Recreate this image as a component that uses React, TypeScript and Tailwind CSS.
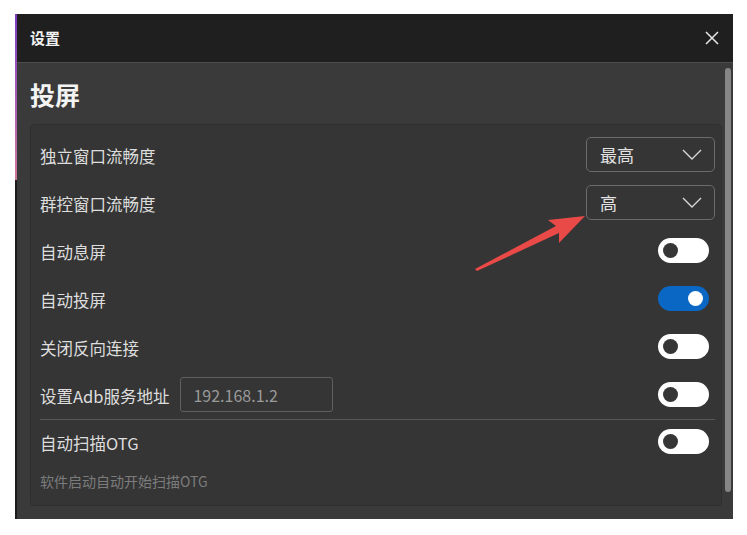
import { ReactNode } from "react";

const font = { fontFamily: '"Noto Sans CJK SC", "Noto Sans", sans-serif' };

function Select({ value }: { value: string }) {
  return (
    <div className="w-[129px] h-[35px] border border-[#6b6b6b] rounded-[5px] flex items-center justify-between pl-[13px] pr-[12px] text-[17px] text-[#e2e2e2]">
      <span className="pt-[2px]">{value}</span>
      <svg width="20" height="11" viewBox="0 0 20 11" fill="none">
        <path d="M1 1l9 9 9-9" stroke="#d6d6d6" strokeWidth="1.4" />
      </svg>
    </div>
  );
}

function Toggle({ on }: { on?: boolean }) {
  return on ? (
    <div className="w-[51px] h-[25px] mr-[6px] rounded-full bg-[#0a67c4] flex items-center justify-end pr-[6px]">
      <div className="w-[15px] h-[15px] rounded-full bg-white" />
    </div>
  ) : (
    <div className="w-[51px] h-[25px] mr-[6px] rounded-full bg-white flex items-center pl-[5px]">
      <div className="w-[15px] h-[15px] rounded-full bg-[#363636]" />
    </div>
  );
}

function Row({ label, children, extra, h = "h-[48px]" }: { label: string; children: ReactNode; extra?: ReactNode; h?: string }) {
  return (
    <div className={`${h} flex items-center justify-between`}>
      <div className="flex items-center gap-[7px]">
        <span className="text-[16.5px] text-[#dedede] pt-[4px]">{label}</span>
        {extra}
      </div>
      {children}
    </div>
  );
}

export default function App() {
  return (
    <div className="w-[747px] h-[535px] bg-white relative pt-[14px] pl-[15px]" style={font}>
      <div className="w-[718px] h-[505px] flex">
        <div className="w-[2px] flex flex-col">
          <div className="h-[166px] bg-gradient-to-b from-[#7b3bc4] to-[#d0769c]" />
          <div className="flex-1 bg-[#1b1b1b]" />
        </div>
        <div className="flex-1 flex flex-col">
          <header className="h-[49px] bg-[#1f1f1f] border-b border-[#4d4d4d] flex items-center justify-between pl-[13px] pr-[14px]">
            <span className="text-[15px] font-bold text-[#f2f2f2]">设置</span>
            <svg width="14" height="14" viewBox="0 0 14 14">
              <path d="M1 1l12 12M13 1L1 13" stroke="#e6e6e6" strokeWidth="1.5" />
            </svg>
          </header>
          <div className="flex-1 bg-[#3a3a3a] flex">
            <div className="flex-1 pl-[13px] flex flex-col">
              <h1 className="h-[30px] mt-[16px] mb-[15px] text-[25px] leading-[30px] font-bold text-[#f4f4f4]">投屏</h1>
              <section className="w-[692px] h-[382px] bg-[#353535] border border-[#2f2f2f] rounded-[4px] pt-[5px] pl-[9px] pr-[6px]">
                <Row label="独立窗口流畅度"><Select value="最高" /></Row>
                <Row label="群控窗口流畅度"><Select value="高" /></Row>
                <Row label="自动息屏"><Toggle /></Row>
                <Row label="自动投屏"><Toggle on /></Row>
                <Row label="关闭反向连接"><Toggle /></Row>
                <Row
                  label="设置Adb服务地址"
                  extra={
                    <div className="w-[153px] h-[35px] ml-[4px] border border-[#5f5f5f] rounded-[3px] flex items-center pl-[12px] pt-[2px] text-[16px] text-[#9a9a9a]">
                      192.168.1.2
                    </div>
                  }
                >
                  <Toggle />
                </Row>
                <div className="h-px bg-[#575757] mt-[1px]" />
                <Row label="自动扫描OTG" h="h-[42px]"><Toggle /></Row>
                <p className="text-[14px] text-[#7c7c7c] mt-[9px]">软件启动自动开始扫描OTG</p>
              </section>
            </div>
            <div className="w-[6px] h-[424px] mt-[5px] ml-[2px] mr-[2px] rounded-[3px] bg-[#868686]" />
          </div>
        </div>
      </div>
      <svg className="absolute left-0 top-0 pointer-events-none" width="747" height="535">
        <polygon points="475,269 556,226 548,220 585,216 559,243 559,233 477,271" fill="#ea4a47" />
      </svg>
    </div>
  );
}
